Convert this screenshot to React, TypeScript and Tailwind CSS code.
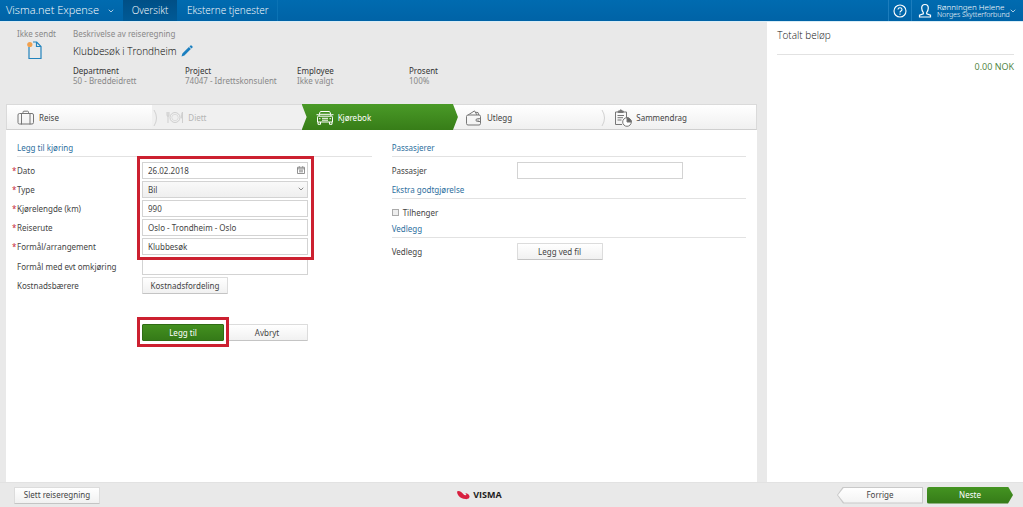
import { ChevronDown } from "lucide-react";
import { useState, type ReactNode } from "react";
import clsx from "clsx";

const field =
  "block h-[17px] w-full border border-[#d3d3d3] bg-white px-[5px] text-[8px] text-[#444] outline-none";
const greyButton =
  "h-[17px] rounded-[1px] border border-[#dcdcdc] border-b-[#c4c4c4] bg-linear-to-b from-white to-[#f1f1f1] text-[8px] text-[#444]";

function SuitcaseIcon() {
  return (
    <svg viewBox="0 0 18 16" className="h-4 w-[18px]" fill="none" stroke="#777" strokeWidth="1">
      <rect x="1" y="3.5" width="15.5" height="10.5" rx="1.5" />
      <path d="M4.5 3.5V14M13 3.5V14M6 3.5V2.2Q6 1.2 7 1.2H10.5Q11.5 1.2 11.5 2.2V3.5M4.5 14.5V15M13 14.5V15" />
    </svg>
  );
}

function PlateIcon() {
  return (
    <svg viewBox="0 0 18 16" className="h-4 w-[18px]" fill="none" stroke="#cfcfcf" strokeWidth="1">
      <circle cx="9" cy="7.5" r="5" />
      <circle cx="9" cy="7.5" r="3.2" strokeWidth="0.6" />
      <path d="M1 2V5Q1 6.5 2 6.5T3 5V2M2 2V13M16.5 13V2Q15 4 15.3 8H16.5" />
    </svg>
  );
}

function CarIcon() {
  return (
    <svg viewBox="0 0 18 16" className="h-4 w-[18px]" fill="none" stroke="#fff" strokeWidth="1">
      <path d="M3 6L3.8 2.5Q4 1.5 5 1.5H13Q14 1.5 14.2 2.5L15 6M2.5 6.2H15.5Q16.5 6.2 16.5 7.2V12H1.5V7.2Q1.5 6.2 2.5 6.2Z" />
      <path d="M2 12V14.3H4.5V12M13.5 12V14.3H16V12M6 8.3H12M6 10.2H12M3 8.7H4.5M13.5 8.7H15M.5 4.7H2.8M15.2 4.7H17.5M4 4.3H14" />
    </svg>
  );
}

function WalletIcon() {
  return (
    <svg viewBox="0 0 18 16" className="h-4 w-[18px]" fill="none" stroke="#777" strokeWidth="1">
      <rect x="1.5" y="5" width="14" height="10" rx="1.5" />
      <path d="M3 5L9.5 .9L12 5M10.5 2.3L13 2.5L13.8 5M15.5 8.7H12.5Q11 8.7 11 10.1T12.5 11.5H15.5" />
      <circle cx="13" cy="10.1" r=".3" />
    </svg>
  );
}

function ReportIcon() {
  return (
    <svg viewBox="0 0 18 18" className="h-[18px] w-[18px]" fill="none" stroke="#777" strokeWidth="1">
      <path d="M8 15.5H1.5V3H4M9.5 3H12.5V9M3.5 6.5H10M3.5 8.7H9M3.5 11H7.5" />
      <path d="M4.2 3.5V2H5.8Q6 .8 6.8 .8T7.8 2H9.3V3.5Z" fill="#777" />
      <circle cx="13" cy="13" r="4.3" fill="#fff" />
      <path d="M13 13V8.7A4.3 4.3 0 0 1 17.3 13Z" fill="#666" />
    </svg>
  );
}

function DocumentIcon() {
  return (
    <svg viewBox="0 0 16 20" className="h-5 w-4" fill="none" stroke="#2384bd" strokeWidth="1.2">
      <path d="M2 7V18.5H14V6.5L9.7 2H6M9.5 2V6.5H14" />
      <circle cx="2.8" cy="4.5" r="2.6" fill="#f2a14f" stroke="none" />
    </svg>
  );
}

function PencilIcon() {
  return (
    <svg viewBox="0 0 12 12" className="block size-3" fill="#1b7fc0">
      <path d="M.5 11.5L1.4 8.6L7.9 2.1L9.9 4.1L3.4 10.6ZM8.5 1.5L9.5 .5Q10 0 10.5 .5L11.5 1.5Q12 2 11.5 2.5L10.5 3.5Z" />
    </svg>
  );
}

function UserIcon() {
  return (
    <svg viewBox="0 0 14 16" className="h-4 w-3.5" fill="none" stroke="#fff" strokeWidth="1.2">
      <path d="M5.3 9.5Q3.7 7.5 3.7 5Q3.7 1.5 7 1.5T10.3 5Q10.3 7.5 8.7 9.5V10.8L12.5 12.2V14H1.5V12.2L5.3 10.8Z" />
    </svg>
  );
}

function HelpIcon() {
  return (
    <svg viewBox="0 0 14 14" className="size-3.5" fill="none" stroke="#fff" strokeWidth="1.1">
      <circle cx="7" cy="7" r="6" />
      <path d="M5 5.5Q5 3.7 7 3.7T9 5.4Q9 6.4 8 6.9T7 8.6M7 9.6V10.8" />
    </svg>
  );
}

function CalendarIcon() {
  return (
    <svg viewBox="0 0 8 8" className="block size-2" fill="none" stroke="#777" strokeWidth=".8">
      <path d="M.5 1.3H7.5V7.5H.5ZM.5 2.8H7.5M2 4.2H6M2 5.8H6M2.3 .2V1.5M5.7 .2V1.5" />
    </svg>
  );
}

function VismaLogo() {
  return (
    <div className="flex items-center gap-[3px]">
      <svg viewBox="0 0 13 10" className="h-2.5 w-[13px]" fill="#d8203f">
        <path d="M.3 1.2Q2.8 .2 4.8 2.4Q6.8 5 8.6 5.3Q10.2 5.2 8.2 2.9Q12.3 3.8 12.6 6.6Q12.3 9.4 8.6 9.1Q3.8 8.6 1.4 5.5Q-.4 2.8 .3 1.2Z" />
      </svg>
      <span className="font-['Open_Sans',sans-serif] text-[9px] leading-[10px] font-bold text-[#1c1c1c]">VISMA</span>
    </div>
  );
}

const steps = [
  { name: "Reise", icon: <SuitcaseIcon /> },
  { name: "Diett", icon: <PlateIcon />, disabled: true },
  { name: "Kjørebok", icon: <CarIcon />, active: true },
  { name: "Utlegg", icon: <WalletIcon /> },
  { name: "Sammendrag", icon: <ReportIcon /> },
];

const details = [
  { label: "Department", value: "50 - Breddeidrett" },
  { label: "Project", value: "74047 - Idrettskonsulent" },
  { label: "Employee", value: "Ikke valgt" },
  { label: "Prosent", value: "100%" },
];

function TopBar() {
  return (
    <header className="flex h-[22px] items-stretch border-b border-[#d9edf7] bg-linear-to-b from-[#006bb0] to-[#0063a6] font-['Open_Sans',sans-serif] text-[10px] font-light text-white">
      <button className="flex w-[123px] items-center justify-between pr-2 pl-1.5 text-[11px]">
        Visma.net Expense
        <ChevronDown className="size-2" />
      </button>
      <nav className="flex">
        <a
          href="#oversikt"
          className="flex w-[54px] items-center justify-center bg-linear-to-b from-[#004f86] to-[#005a96]"
        >
          Oversikt
        </a>
        <a href="#tjenester" className="flex items-center border-r border-[#0b73b5] pr-2 pl-2.5">
          Eksterne tjenester
        </a>
      </nav>
      <div className="ml-auto flex">
        <button aria-label="Hjelp" className="flex w-6 items-center justify-center border-x border-[#1c7dbd]">
          <HelpIcon />
        </button>
        <button className="flex items-center pr-1.5 pl-1.5 text-left">
          <UserIcon />
          <span className="ml-[5px] w-[72px] font-['Noto_Sans',sans-serif] whitespace-nowrap">
            <span className="block text-[8px] leading-[9px]">Rønningen Helene</span>
            <span className="block text-[7px] leading-[8px]">Norges Skytterforbund</span>
          </span>
          <ChevronDown className="size-2" />
        </button>
      </div>
    </header>
  );
}

function Steps() {
  return (
    <nav className="grid h-[26px] grid-cols-[repeat(4,1fr)_152px] border border-[#dadada] border-b-[#cfcfcf] bg-linear-to-b from-white to-[#f0f0f0]">
      {steps.map((step, i) => (
        <button
          key={step.name}
          disabled={step.disabled}
          className={clsx(
            "relative flex items-center gap-1 pt-0.5 text-[8px]",
            step.disabled ? "-ml-1 bg-[#f0f0f0] pl-3.5 text-[#b5b5b5]" : "pl-2.5",
            step.active && "text-white",
            !step.disabled && !step.active && "text-[#444]",
          )}
        >
          {step.active && (
            <span className="absolute -inset-y-px -right-[3px] -left-1 bg-linear-to-b from-[#4a9a27] to-[#377d18] [clip-path:polygon(0_0,calc(100%-5px)_0,100%_50%,calc(100%-5px)_100%,0_100%,5px_50%)]" />
          )}
          {(i === 0 || i === 3) && (
            <svg
              viewBox="0 0 5 18"
              className="absolute top-1 -right-0.5 z-10 h-[18px] w-[5px]"
              fill="none"
              stroke="#d2d2d2"
            >
              <path d="M1 1Q6 9 1 17" />
            </svg>
          )}
          <span className="relative">{step.icon}</span>
          <span className="relative">{step.name}</span>
        </button>
      ))}
    </nav>
  );
}

function SectionTitle({ children }: { children: ReactNode }) {
  return (
    <h2 className="border-b border-[#e2e2e2] pb-0.5 text-[8px] leading-[12px] text-[#2e6f9e]">{children}</h2>
  );
}

function Row({ id, label, required, children }: { id: string; label: string; required?: boolean; children: ReactNode }) {
  return (
    <div className="flex h-[17px] items-center">
      <label htmlFor={id} className="relative w-[125px] shrink-0 text-[8px] leading-[12px]">
        {required && <span className="absolute -left-[5px] text-[#c4283a]">*</span>}
        {label}
      </label>
      {children}
    </div>
  );
}

export default function App() {
  const [trailer, setTrailer] = useState(false);

  return (
    <div className="flex min-h-screen flex-col bg-[#e9e9e9] font-['Noto_Sans',sans-serif] text-[#444]">
      <TopBar />
      <div className="flex flex-1">
        <main className="flex flex-1 flex-col pr-2.5 pl-1.5">
          <section className="flex h-[82px] pt-1.5 pl-[11px]">
            <div className="w-14 text-[8px] leading-[12px] text-[#888]">
              Ikke sendt
              <div className="pl-2.5">
                <DocumentIcon />
              </div>
            </div>
            <div>
              <p className="text-[8px] leading-[12px] text-[#888]">Beskrivelse av reiseregning</p>
              <h1 className="mt-1 flex items-center gap-1 font-['Open_Sans',sans-serif] text-[10px] leading-[14px] font-light text-black">
                Klubbesøk i Trondheim
                <button aria-label="Rediger">
                  <PencilIcon />
                </button>
              </h1>
              <dl className="mt-2 flex text-[8px] leading-[10px]">
                {details.map((d) => (
                  <div key={d.label} className="w-28">
                    <dt className="text-[#333]">{d.label}</dt>
                    <dd className="text-[#888]">{d.value}</dd>
                  </div>
                ))}
              </dl>
            </div>
          </section>

          <Steps />

          <div className="grid flex-1 auto-rows-min grid-cols-2 gap-5 bg-white px-[11px] pt-3">
            <form onSubmit={(e) => e.preventDefault()}>
              <SectionTitle>Legg til kjøring</SectionTitle>
              <div className="relative mt-[5px] flex flex-col gap-0.5">
                <Row id="dato" label="Dato" required>
                  <div className="relative w-[166px]">
                    <input id="dato" className={field} defaultValue="26.02.2018" />
                    <button type="button" aria-label="Velg dato" className="absolute top-1 right-[3px]">
                      <CalendarIcon />
                    </button>
                  </div>
                </Row>
                <Row id="type" label="Type" required>
                  <div className="relative w-[166px]">
                    <select
                      id="type"
                      className={clsx(field, "appearance-none bg-linear-to-b from-[#f9f9f9] to-[#efefef]")}
                    >
                      <option>Bil</option>
                    </select>
                    <ChevronDown className="pointer-events-none absolute top-1 right-[3px] size-2 text-[#555]" />
                  </div>
                </Row>
                <Row id="lengde" label="Kjørelengde (km)" required>
                  <div className="w-[166px]">
                    <input id="lengde" className={field} defaultValue="990" />
                  </div>
                </Row>
                <Row id="rute" label="Reiserute" required>
                  <div className="w-[166px]">
                    <input id="rute" className={field} defaultValue="Oslo - Trondheim - Oslo" />
                  </div>
                </Row>
                <Row id="formal" label="Formål/arrangement" required>
                  <div className="w-[166px]">
                    <input id="formal" className={field} defaultValue="Klubbesøk" />
                  </div>
                </Row>
                <div className="pointer-events-none absolute -top-1.5 -bottom-[5px] left-[120px] z-10 w-[177px] border-3 border-[#cc2030]" />
              </div>
              <div className="mt-[3px] flex flex-col gap-0.5">
                <Row id="omkjoring" label="Formål med evt omkjøring">
                  <div className="w-[166px]">
                    <input id="omkjoring" className={field} />
                  </div>
                </Row>
                <Row id="fordeling" label="Kostnadsbærere">
                  <button id="fordeling" type="button" className={clsx(greyButton, "w-[86px]")}>
                    Kostnadsfordeling
                  </button>
                </Row>
              </div>
              <div className="mt-[30px] flex gap-0.5 pl-[125px]">
                <div className="relative">
                  <button className="block h-[17px] w-[82px] rounded-[1px] border border-[#2f6d14] bg-linear-to-b from-[#43901f] to-[#357a18] text-[8px] text-white">
                    Legg til
                  </button>
                  <div className="pointer-events-none absolute -inset-x-[5px] -top-[7px] -bottom-1.5 z-10 border-3 border-[#cc2030]" />
                </div>
                <button type="button" className={clsx(greyButton, "w-[82px]")}>
                  Avbryt
                </button>
              </div>
            </form>

            <section>
              <SectionTitle>Passasjerer</SectionTitle>
              <div className="mt-[5px]">
                <Row id="passasjer" label="Passasjer">
                  <div className="w-[166px]">
                    <input id="passasjer" className={field} />
                  </div>
                </Row>
              </div>
              <div className="mt-[5px]">
                <SectionTitle>Ekstra godtgjørelse</SectionTitle>
              </div>
              <label className="mt-[5px] mb-0.5 flex h-[17px] items-center gap-1 text-[8px]">
                <input
                  type="checkbox"
                  checked={trailer}
                  onChange={(e) => setTrailer(e.target.checked)}
                  className="size-[7px] appearance-none border border-[#aaa] bg-[#eee] checked:bg-[#357a18]"
                />
                Tilhenger
              </label>
              <SectionTitle>Vedlegg</SectionTitle>
              <div className="mt-[5px]">
                <Row id="vedlegg" label="Vedlegg">
                  <button id="vedlegg" type="button" className={clsx(greyButton, "w-[86px]")}>
                    Legg ved fil
                  </button>
                </Row>
              </div>
            </section>
          </div>
        </main>

        <aside className="w-1/4 bg-white pt-1.5 pr-[9px] pl-2.5">
          <h2 className="border-b border-[#e2e2e2] pb-3 font-['Open_Sans',sans-serif] text-[10px] leading-[14px] font-light text-[#111]">
            Totalt beløp
          </h2>
          <p className="mt-1.5 text-right font-['Open_Sans',sans-serif] text-[9px] leading-[12px] text-[#4d7f3c]">
            0.00 NOK
          </p>
        </aside>
      </div>

      <footer className="grid h-[25px] grid-cols-[13fr_auto_15fr] items-center border-t border-[#e2e2e2] pr-2.5 pl-3.5">
        <div className="flex">
          <button className={clsx(greyButton, "w-[86px]")}>Slett reiseregning</button>
        </div>
        <VismaLogo />
        <div className="flex justify-end gap-1">
          <button className="h-[17px] w-[86px] bg-[#c9c9c9] p-px text-[8px] text-[#444] [clip-path:polygon(6px_0,100%_0,100%_100%,6px_100%,0_50%)]">
            <span className="flex h-full items-center justify-center bg-linear-to-b from-white to-[#f3f3f3] [clip-path:polygon(6px_0,100%_0,100%_100%,6px_100%,0_50%)]">
              Forrige
            </span>
          </button>
          <button className="h-[17px] w-[86px] rounded-l-[2px] bg-linear-to-b from-[#449421] to-[#357a18] text-[8px] text-white [clip-path:polygon(0_0,calc(100%-5px)_0,100%_50%,calc(100%-5px)_100%,0_100%)]">
            Neste
          </button>
        </div>
      </footer>
    </div>
  );
}
